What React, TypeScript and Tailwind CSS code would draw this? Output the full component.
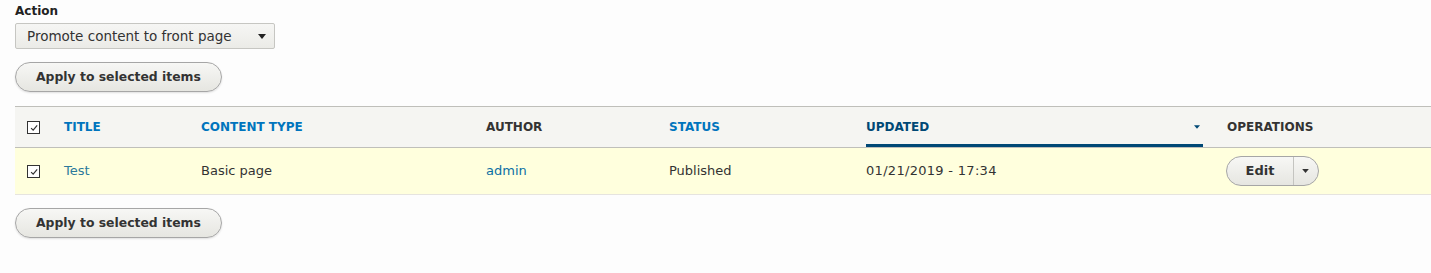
import React from "react";

const font = "font-['DejaVu_Sans','Verdana',sans-serif]";

const Check = () => (
  <span className="inline-flex h-[13px] w-[13px] items-center justify-center border border-[#333] bg-white">
    <svg viewBox="0 0 12 12" className="h-[10px] w-[10px]" fill="none" stroke="#333" strokeWidth="1.4">
      <path d="M2.5 6.2 L5 8.6 L9.8 2.8" />
    </svg>
  </span>
);

const Caret = ({ className = "" }: { className?: string }) => (
  <svg viewBox="0 0 10 6" className={className} fill="currentColor">
    <path d="M0 0 H10 L5 6 Z" />
  </svg>
);

const ApplyButton = () => (
  <button className="h-[30px] rounded-full border border-[#a6a6a6] bg-gradient-to-b from-[#f7f7f5] to-[#e6e6e1] px-[20px] text-[12.4px] font-bold text-[#333] shadow-[0_1px_2px_rgba(0,0,0,0.12)]">
    Apply to selected items
  </button>
);

export default function App() {
  return (
    <div className={`${font} min-h-[273px] bg-[#fdfdfd] pl-[15px] pt-[3px] text-[#222]`}>
      <label className="block text-[12px] font-bold leading-[16px] text-[#222]">Action</label>
      <div className="mt-[4px] flex h-[26px] w-[260px] items-center justify-between rounded-[2px] border border-[#c6c6c2] bg-gradient-to-b from-[#f6f6f4] to-[#ebebe7] pl-[11px] pr-[8px] text-[13.5px] text-[#333]">
        <span>Promote content to front page</span>
        <Caret className="h-[5px] w-[8px] text-[#222]" />
      </div>
      <div className="mt-[13px]">
        <ApplyButton />
      </div>

      <table className="mt-[14px] w-full table-fixed border-collapse">
        <colgroup>
          <col className="w-[37px]" />
          <col className="w-[137px]" />
          <col className="w-[285px]" />
          <col className="w-[183px]" />
          <col className="w-[197px]" />
          <col className="w-[361px]" />
          <col />
        </colgroup>
        <thead>
          <tr className="h-[41px] border-t border-b border-t-[#bfbfba] border-b-[#bfbfba] bg-[#f5f5f2] text-left text-[12px] font-bold uppercase">
            <th className="px-3 align-middle">
              <div className="flex pt-[1px]"><Check /></div>
            </th>
            <th className="px-3 text-[#0074bd]">Title</th>
            <th className="px-3 text-[#0074bd]">Content type</th>
            <th className="px-3 text-[#333]">Author</th>
            <th className="px-3 text-[#0074bd]">Status</th>
            <th className="px-3 pb-0 align-bottom">
              <div className="flex h-[39px] items-center justify-between border-b-[3px] border-[#004875] pt-[2px] text-[#004875]">
                <span>Updated</span>
                <Caret className="mr-[3px] h-[4px] w-[6px] text-[#004875]" />
              </div>
            </th>
            <th className="px-3 text-[#333]">Operations</th>
          </tr>
        </thead>
        <tbody>
          <tr className="h-[47px] border-b border-[#e6e4df] bg-[#ffffdd] text-[13px] text-[#333]">
            <td className="px-3">
              <div className="flex pt-[1px]"><Check /></div>
            </td>
            <td className="px-3 text-[#2c7a9b]">Test</td>
            <td className="px-3">Basic page</td>
            <td className="px-3 text-[#0b6fa4]">admin</td>
            <td className="px-3">Published</td>
            <td className="px-3 tracking-[0.3px]">01/21/2019 - 17:34</td>
            <td className="px-3">
              <div className="ml-[-1px] inline-flex h-[30px] items-stretch overflow-hidden rounded-full border border-[#a6a6a6] bg-gradient-to-b from-[#f7f7f5] to-[#e6e6e1]">
                <span className="flex w-[66px] items-center justify-center text-[13px] font-bold text-[#333]">Edit</span>
                <span className="flex w-[25px] items-center justify-center border-l border-[#c4c4c0] pr-[2px]">
                  <Caret className="h-[4px] w-[7px] text-[#333]" />
                </span>
              </div>
            </td>
          </tr>
        </tbody>
      </table>

      <div className="mt-[13px]">
        <ApplyButton />
      </div>
    </div>
  );
}
